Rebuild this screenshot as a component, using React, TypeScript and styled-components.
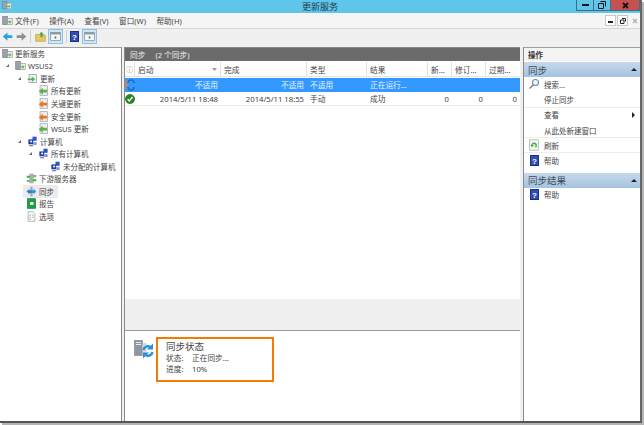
import React from 'react';
import styled, { createGlobalStyle } from 'styled-components';

const GlobalStyle = createGlobalStyle`
  html, body {
    margin: 0;
    padding: 0;
    background: #fff;
  }
  body {
    font-family: "Noto Sans", "Noto Sans CJK SC", sans-serif;
    font-size: 7.5px;
    color: #333;
  }
`;

const Page = styled.div`
  width: 644px;
  height: 425px;
  overflow: hidden;
  background: #fff;
`;

const Win = styled.div`
  width: 642px;
  height: 423px;
  display: flex;
  flex-direction: column;
  background: #f0f0f0;
  border-bottom: 2px solid #555;
  border-right: 2px solid #666;
  box-shadow: 2px 2px 0 #b4b4b4;
  box-sizing: border-box;
`;

const TitleBar = styled.div`
  height: 13px;
  flex: none;
  background: #5fc6ea;
  display: flex;
  align-items: flex-start;
  position: relative;
  padding-left: 2px;
`;

const Title = styled.div`
  position: absolute;
  left: 0;
  right: 0;
  top: 0;
  text-align: center;
  font-size: 9px;
  line-height: 13px;
  color: #1f3a48;
  pointer-events: none;
`;

const Controls = styled.div`
  margin-left: auto;
  display: flex;
  height: 11px;
  border-left: 1px solid #3f6f82;
`;

const CtlBtn = styled.div<{ $close?: boolean; $w: number }>`
  width: ${(p) => p.$w}px;
  height: 11px;
  display: flex;
  align-items: center;
  justify-content: center;
  background: ${(p) => (p.$close ? '#c75050' : '#5fc6ea')};
  border-right: 1px solid #3f6f82;
  border-bottom: 1px solid #3f6f82;
  box-sizing: border-box;
`;

const MenuBar = styled.div`
  height: 16px;
  flex: none;
  display: flex;
  align-items: center;
  background: #f5f5f5;
  border-bottom: 1px solid #d6d6d6;
  box-sizing: border-box;
  padding-left: 2px;
  position: relative;
`;

const MenuItem = styled.span`
  margin-right: 10.5px;
  font-size: 7.6px;
  color: #444;
  white-space: nowrap;
`;

const MenuIcon = styled.div`
  width: 11px;
  margin-right: 2px;
  display: flex;
`;

const ChildCtls = styled.div`
  margin-left: auto;
  display: flex;
  gap: 1px;
`;

const ChildBtn = styled.div<{ $off?: boolean }>`
  width: 11px;
  height: 11px;
  background: ${(p) => (p.$off ? 'transparent' : '#fff')};
  border: 1px solid ${(p) => (p.$off ? 'transparent' : '#c8c8c8')};
  box-sizing: border-box;
  display: flex;
  align-items: center;
  justify-content: center;
`;

const ToolBar = styled.div`
  height: 18px;
  flex: none;
  display: flex;
  align-items: flex-start;
  background: #f0f0f0;
`;

const ToolBtn = styled.div<{ $on?: boolean; $w?: number }>`
  width: ${(p) => p.$w ?? 14}px;
  height: 15px;
  display: flex;
  align-items: center;
  justify-content: center;
  box-sizing: border-box;
  background: ${(p) => (p.$on ? '#cfe6f5' : 'transparent')};
  border: 1px solid ${(p) => (p.$on ? '#8fc3e6' : 'transparent')};
`;

const ToolSep = styled.div<{ $left: number; $right: number }>`
  width: 1px;
  height: 13px;
  margin: 1px ${(p) => p.$right}px 0 ${(p) => p.$left}px;
  background: #d0d0d0;
`;

const Body = styled.div`
  flex: 1;
  min-height: 0;
  display: flex;
  background: #f0f0f0;
`;

const TreePane = styled.div`
  width: 122px;
  flex: none;
  background: #fff;
  box-shadow: inset 0 1px 0 #a0a0a0;
  border-right: 1px solid #8a8a8a;
  box-sizing: border-box;
`;

const TreeRow = styled.div<{ $depth: number }>`
  height: 12.55px;
  display: flex;
  align-items: center;
  padding-left: ${(p) => p.$depth}px;
  white-space: nowrap;
  color: #444;
`;

const Arrow = styled.span`
  width: 0;
  height: 0;
  border-style: solid;
  border-width: 0 0 3px 3px;
  border-color: transparent transparent #666 transparent;
  margin-right: 6px;
  flex: none;
`;

const TreeEntry = styled.span<{ $hot?: boolean }>`
  display: flex;
  align-items: center;
  height: 13px;
  background: ${(p) => (p.$hot ? '#ebebeb' : 'transparent')};
  margin-left: ${(p) => (p.$hot ? '-3px' : '0')};
  padding: ${(p) => (p.$hot ? '0 4px 0 3px' : '0')};
`;

const TreeIcon = styled.span`
  width: 11px;
  height: 11px;
  flex: none;
  display: flex;
  margin-right: 2px;
`;

const Center = styled.div`
  width: 396px;
  flex: none;
  margin-left: 2px;
  display: flex;
  flex-direction: column;
  border-left: 1px solid #8a8a8a;
  background: #fff;
  box-sizing: border-box;
`;

const PaneHead = styled.div`
  height: 14px;
  flex: none;
  background: #6b6b6b;
  color: #eee;
  display: flex;
  align-items: center;
  padding-left: 5px;
  gap: 10px;
  font-size: 7.7px;
  border-top: 1px solid #888;
  box-sizing: border-box;
`;

const Columns = 'grid-template-columns: 10px 86px 86px 60px 61px 24px 34px 34px;';

const HeadRow = styled.div`
  ${Columns}
  display: grid;
  height: 15px;
  flex: none;
  margin-top: 1px;
  border-bottom: 1px solid #e4e4e4;
  box-sizing: border-box;
  align-items: stretch;
`;

const HeadCell = styled.div`
  display: flex;
  align-items: center;
  justify-content: space-between;
  padding: 0 3px;
  border-right: 1px solid #e2e2e2;
  color: #444;
  font-size: 7.7px;
  white-space: nowrap;
  overflow: hidden;
  &:first-child {
    padding: 0;
    justify-content: center;
    color: #888;
    font-size: 7px;
  }
  &:last-child {
    border-right: none;
  }
`;

const Row = styled.div<{ $sel?: boolean }>`
  ${Columns}
  display: grid;
  height: 14px;
  flex: none;
  align-items: center;
  margin-top: ${(p) => (p.$sel ? 1 : 0)}px;
  background: ${(p) => (p.$sel ? '#3399ff' : '#fff')};
  color: ${(p) => (p.$sel ? '#e8f3ff' : '#444')};
  border-bottom: 1px solid ${(p) => (p.$sel ? '#3399ff' : '#ececec')};
  box-sizing: border-box;
  font-size: 7.7px;
`;

const Cell = styled.div<{ $right?: boolean }>`
  text-align: ${(p) => (p.$right ? 'right' : 'left')};
  padding: 0 3px;
  white-space: nowrap;
  overflow: hidden;
  &:first-child {
    padding: 0;
    overflow: visible;
    display: flex;
  }
`;

const Spacer = styled.div`
  flex: 1;
`;

const Band = styled.div`
  height: 32px;
  flex: none;
  background: #f0f0f0;
  border-bottom: 1px solid #9a9a9a;
  box-sizing: border-box;
`;

const Details = styled.div`
  height: 90px;
  flex: none;
  display: flex;
  align-items: flex-start;
  padding: 6px 0 0 9px;
  box-sizing: border-box;
  background: #fff;
`;

const DetailsIcon = styled.div`
  width: 20px;
  height: 20px;
  flex: none;
  margin: 3px 2px 0 0;
`;

const Highlight = styled.div`
  width: 118px;
  height: 45px;
  box-sizing: border-box;
  border: 2px solid #f57c00;
  padding: 1px 0 0 8px;
  color: #444;
`;

const DetailsTitle = styled.div`
  font-size: 9.5px;
  line-height: 13px;
`;

const DetailsLine = styled.div`
  display: flex;
  font-size: 7.7px;
  line-height: 11px;
`;

const DetailsKey = styled.span`
  width: 26px;
`;

const Actions = styled.div`
  flex: 1;
  background: #fff;
  margin-left: 3px;
  border-left: 1px solid #8a8a8a;
  box-sizing: border-box;
`;

const ActionsHead = styled.div`
  height: 14px;
  display: flex;
  align-items: center;
  padding-left: 4px;
  font-size: 7.5px;
  font-weight: 700;
  color: #333;
  background: #f4f4f4;
  border-top: 1px solid #a0a0a0;
  box-sizing: border-box;
  margin-bottom: 1px;
`;

const Section = styled.div`
  height: 15px;
  display: flex;
  align-items: center;
  justify-content: space-between;
  padding: 0 3px 0 4px;
  font-size: 9.5px;
  color: #3c4a5a;
  background: linear-gradient(#c6d9ec, #a5c2de);
`;

const Up = styled.span`
  width: 0;
  height: 0;
  border-style: solid;
  border-width: 0 3px 3px 3px;
  border-color: transparent transparent #222 transparent;
`;

const ActionRow = styled.div<{ $line?: boolean }>`
  height: 15.3px;
  display: flex;
  align-items: center;
  color: #444;
  font-size: 7.5px;
  border-bottom: 1px solid ${(p) => (p.$line ? '#ededed' : 'transparent')};
  box-sizing: border-box;
  padding-right: 5px;
`;

const ActionIcon = styled.span`
  width: 20px;
  flex: none;
  display: flex;
  justify-content: center;
`;

const RightTri = styled.span`
  margin-left: auto;
  width: 0;
  height: 0;
  border-style: solid;
  border-width: 3px 0 3px 3px;
  border-color: transparent transparent transparent #222;
`;

const Gap = styled.div`
  height: 4px;
`;

const Svg = ({ s = 11, children }: { s?: number; children: React.ReactNode }) => (
  <svg width={s} height={s} viewBox="0 0 16 16" style={{ display: 'block' }}>
    {children}
  </svg>
);

const ServerIcon = ({ s }: { s?: number }) => (
  <Svg s={s}>
    <rect x="1" y="2" width="7" height="12" fill="#9aa3ad" stroke="#7a828a" />
    <rect x="8" y="5" width="7" height="9" fill="#eef1e8" stroke="#999" />
    <path d="M7 9h4V7l3 3-3 3v-2H7z" fill="#5cb85c" />
  </Svg>
);

const NodeIcon = () => (
  <Svg>
    <rect x="3" y="2" width="11" height="12" fill="#eef2f5" stroke="#8a96a8" />
    <path d="M1 8h6V5l5 4-5 4v-3H1z" fill="#56b64a" />
  </Svg>
);

const PageArrow = ({ c }: { c: string }) => (
  <Svg>
    <rect x="3" y="1" width="11" height="14" fill="#f0eef0" stroke="#9a9ab0" />
    <path d="M1 9l6-5v3h6v4H7v3z" fill={c} />
  </Svg>
);

const ComputersIcon = () => (
  <Svg>
    <rect x="8" y="1" width="6" height="6" fill="#2f55c4" />
    <rect x="2" y="5" width="7" height="7" fill="#1d3da8" />
    <rect x="9" y="9" width="5" height="4" fill="#7b93d8" />
    <rect x="3" y="13" width="6" height="2" fill="#889" />
    <circle cx="6" cy="8" r="1.5" fill="#fff" />
  </Svg>
);

const DownstreamIcon = () => (
  <Svg>
    <rect x="5" y="1" width="6" height="14" fill="#a8b0a8" />
    <path d="M1 4h5v3H1zM10 9h5v3h-5z" fill="#48ad48" />
    <path d="M1 10h5v3H1zM10 3h5v3h-5z" fill="#6fc26f" />
  </Svg>
);

const SyncIcon = () => (
  <Svg>
    <path d="M8 1v14" stroke="#9aa5b2" strokeWidth="3" />
    <path d="M1 8l4-4v2h4v4H5v2z" fill="#2d7fd4" />
    <path d="M15 8l-4 4v-2H8V6h3V4z" fill="#2d9be0" />
  </Svg>
);

const ReportIcon = () => (
  <Svg>
    <rect x="2" y="1" width="12" height="14" fill="#1e9e4a" stroke="#167a38" />
    <rect x="6" y="6" width="5" height="4" fill="#e3f5e8" />
  </Svg>
);

const OptionsIcon = () => (
  <Svg>
    <path d="M3 1h7l3 3v11H3z" fill="#fbfbfb" stroke="#9a9a9a" />
    <path d="M5 6h2M9 6h2M5 9h2M9 9h2M5 12h2" stroke="#777" />
  </Svg>
);

const HelpIcon = ({ s = 9 }: { s?: number }) => (
  <svg width={s} height={s + 2} viewBox="0 0 9 11" style={{ display: 'block' }}>
    <rect x="0.5" y="0.5" width="8" height="10" fill="#2f4fb5" stroke="#1c2f80" />
    <text x="4.5" y="8.5" fontSize="8" fontWeight="700" fontFamily="Liberation Sans" textAnchor="middle" fill="#fff">?</text>
  </svg>
);

const SearchIcon = () => (
  <Svg s={12}>
    <circle cx="10" cy="6" r="4" fill="#f2f8fc" stroke="#6d8ca0" strokeWidth="1.4" />
    <path d="M7 9l-5 5" stroke="#7a8a70" strokeWidth="2" />
  </Svg>
);

const RefreshIcon = () => (
  <Svg s={12}>
    <rect x="2" y="1" width="12" height="14" fill="#f2f2f2" stroke="#b5b5b5" />
    <path d="M5 9a3 3 0 1 1 5 2" fill="none" stroke="#45b045" strokeWidth="2" />
    <path d="M3 8h5l-2.5 3z" fill="#45b045" />
  </Svg>
);

const OkIcon = () => (
  <svg width={10} height={10} viewBox="0 0 10 10" style={{ display: 'block' }}>
    <circle cx="5" cy="5" r="4.6" fill="#1f8a1f" stroke="#126012" strokeWidth="0.6" />
    <path d="M2.6 5.2l1.7 1.8 3.2-4" fill="none" stroke="#fff" strokeWidth="1.4" />
  </svg>
);

const SmallSync = () => (
  <svg width={10} height={12} viewBox="0 0 10 12" style={{ display: 'block' }}>
    <rect x="0" y="1" width="3" height="9" fill="#8a94a0" />
    <path d="M3 4a3 3 0 0 1 6 0M9 8a3 3 0 0 1-6 0" fill="none" stroke="#1a6fb8" strokeWidth="1.6" />
  </svg>
);

const BigSyncIcon = () => (
  <svg width={20} height={20} viewBox="0 0 20 20" style={{ display: 'block' }}>
    <rect x="0.5" y="0.5" width="8" height="15" fill="#8f98a2" stroke="#777f87" strokeWidth="0.6" />
    <rect x="2" y="2" width="5" height="1" fill="#e8eaec" />
    <rect x="2" y="4" width="5" height="1" fill="#e8eaec" />
    <rect x="8.5" y="3" width="4" height="12" fill="#d5d9dd" />
    <path d="M9.5 10a4.500 4.500 0 0 1 7-3" fill="none" stroke="#2a8fdc" strokeWidth="2.4" />
    <path d="M19 3.500v6h-6z" fill="#2a8fdc" />
    <path d="M18.500 12a4.500 4.500 0 0 1-7 3" fill="none" stroke="#2a8fdc" strokeWidth="2.4" />
    <path d="M9 18.500v-6h6z" fill="#2a8fdc" />
  </svg>
);

const BackIcon = () => (
  <Svg s={11}>
    <path d="M1 8l7-6v4h7v4H8v4z" fill="#2f9fe0" />
  </Svg>
);

const ForwardIcon = () => (
  <Svg s={11}>
    <path d="M15 8L8 2v4H1v4h7v4z" fill="#8f8f8f" />
  </Svg>
);

const FolderUp = () => (
  <Svg s={11}>
    <path d="M1 5h5l1 1h8v9H1z" fill="#e8c860" stroke="#b89a3c" />
    <path d="M9 1l4 4h-2v4H8V5H6z" fill="#4aa84a" />
  </Svg>
);

const PanelIcon = ({ right }: { right?: boolean }) => (
  <Svg s={11}>
    <rect x="1" y="2" width="14" height="12" fill="#f6f6f6" stroke="#7a8a96" />
    <rect x="1" y="2" width="14" height="3" fill="#8a9aa8" />
    <path d={right ? 'M7 7l3 2.500-3 2.500z' : 'M9 7L6 9.500 9 12z'} fill="#3aa03a" />
  </Svg>
);

const treeRows: { label: string; depth: number; arrow?: boolean; icon: React.ReactNode; hot?: boolean }[] = [
  { label: '更新服务', depth: 2, icon: <ServerIcon /> },
  { label: 'WSUS2', depth: 6, arrow: true, icon: <ServerIcon /> },
  { label: '更新', depth: 18, arrow: true, icon: <NodeIcon /> },
  { label: '所有更新', depth: 38, icon: <PageArrow c="#56b64a" /> },
  { label: '关键更新', depth: 38, icon: <PageArrow c="#e87820" /> },
  { label: '安全更新', depth: 38, icon: <PageArrow c="#e87820" /> },
  { label: 'WSUS 更新', depth: 38, icon: <PageArrow c="#56b64a" /> },
  { label: '计算机', depth: 18, arrow: true, icon: <ComputersIcon /> },
  { label: '所有计算机', depth: 29, arrow: true, icon: <ComputersIcon /> },
  { label: '未分配的计算机', depth: 50, icon: <ComputersIcon /> },
  { label: '下游服务器', depth: 26, icon: <DownstreamIcon /> },
  { label: '同步', depth: 26, icon: <SyncIcon />, hot: true },
  { label: '报告', depth: 26, icon: <ReportIcon /> },
  { label: '选项', depth: 26, icon: <OptionsIcon /> },
];

const headers = ['启动', '完成', '类型', '结果', '新...', '修订...', '过期...'];

const App = () => (
  <Page>
    <GlobalStyle />
    <Win>
      <TitleBar>
        <ServerIcon s={10} />
        <Title>更新服务</Title>
        <Controls>
          <CtlBtn $w={17}>
            <svg width="7" height="2"><rect width="7" height="2" fill="#111" /></svg>
          </CtlBtn>
          <CtlBtn $w={17}>
            <svg width="8" height="8" viewBox="0 0 8 8">
              <path d="M2.500 0.500h5v5M0.500 2.500h5v5h-5z" fill="none" stroke="#111" />
            </svg>
          </CtlBtn>
          <CtlBtn $w={29} $close>
            <svg width="7" height="7" viewBox="0 0 7 7">
              <path d="M1 1l5 5M6 1L1 6" stroke="#111" strokeWidth="1.8" />
            </svg>
          </CtlBtn>
        </Controls>
      </TitleBar>
      <MenuBar>
        <MenuIcon><ServerIcon s={11} /></MenuIcon>
        <MenuItem>文件(F)</MenuItem>
        <MenuItem>操作(A)</MenuItem>
        <MenuItem>查看(V)</MenuItem>
        <MenuItem>窗口(W)</MenuItem>
        <MenuItem>帮助(H)</MenuItem>
        <ChildCtls>
          <ChildBtn>
            <svg width="5" height="5"><rect y="3" width="5" height="2" fill="#222" /></svg>
          </ChildBtn>
          <ChildBtn>
            <svg width="6" height="6" viewBox="0 0 6 6">
              <path d="M2 .5h3.500v3M.5 2h3.500v3.500H.5z" fill="none" stroke="#222" />
            </svg>
          </ChildBtn>
          <ChildBtn $off>
            <svg width="6" height="6" viewBox="0 0 6 6">
              <path d="M1 1l4 4M5 1L1 5" stroke="#a9b6c2" strokeWidth="1.5" />
            </svg>
          </ChildBtn>
        </ChildCtls>
      </MenuBar>
      <ToolBar>
        <ToolBtn><BackIcon /></ToolBtn>
        <ToolBtn><ForwardIcon /></ToolBtn>
        <ToolSep $left={2} $right={2} />
        <ToolBtn $w={15}><FolderUp /></ToolBtn>
        <ToolBtn $w={15} $on><PanelIcon /></ToolBtn>
        <ToolSep $left={3} $right={0} />
        <ToolBtn $w={15}><HelpIcon /></ToolBtn>
        <ToolBtn $w={15} $on><PanelIcon right /></ToolBtn>
      </ToolBar>
      <Body>
        <TreePane>
          {treeRows.map((r) => (
            <TreeRow key={r.label} $depth={r.depth}>
              {r.arrow && <Arrow />}
              <TreeEntry $hot={r.hot}>
                <TreeIcon>{r.icon}</TreeIcon>
                {r.label}
              </TreeEntry>
            </TreeRow>
          ))}
        </TreePane>
        <Center>
          <PaneHead>
            <span>同步</span>
            <span>(2 个同步)</span>
          </PaneHead>
          <HeadRow>
            <HeadCell>ⓘ</HeadCell>
            {headers.map((h, i) => (
              <HeadCell key={h}>
                <span>{h}</span>
                {i === 0 && (
                  <svg width="5" height="3"><path d="M0 0h5L2.500 3z" fill="#999" /></svg>
                )}
              </HeadCell>
            ))}
          </HeadRow>
          <Row $sel>
            <Cell><SmallSync /></Cell>
            <Cell $right>不适用</Cell>
            <Cell $right>不适用</Cell>
            <Cell>不适用</Cell>
            <Cell>正在运行...</Cell>
          </Row>
          <Row>
            <Cell><OkIcon /></Cell>
            <Cell $right>2014/5/11 18:48</Cell>
            <Cell $right>2014/5/11 18:55</Cell>
            <Cell>手动</Cell>
            <Cell>成功</Cell>
            <Cell $right>0</Cell>
            <Cell $right>0</Cell>
            <Cell $right>0</Cell>
          </Row>
          <Spacer />
          <Band />
          <Details>
            <DetailsIcon><BigSyncIcon /></DetailsIcon>
            <Highlight>
              <DetailsTitle>同步状态</DetailsTitle>
              <DetailsLine><DetailsKey>状态:</DetailsKey>正在同步...</DetailsLine>
              <DetailsLine><DetailsKey>进度:</DetailsKey>10%</DetailsLine>
            </Highlight>
          </Details>
        </Center>
        <Actions>
          <ActionsHead>操作</ActionsHead>
          <Section>同步<Up /></Section>
          <ActionRow><ActionIcon><SearchIcon /></ActionIcon>搜索...</ActionRow>
          <ActionRow $line><ActionIcon />停止同步</ActionRow>
          <ActionRow><ActionIcon />查看<RightTri /></ActionRow>
          <ActionRow $line><ActionIcon />从此处新建窗口</ActionRow>
          <ActionRow $line><ActionIcon><RefreshIcon /></ActionIcon>刷新</ActionRow>
          <ActionRow><ActionIcon><HelpIcon /></ActionIcon>帮助</ActionRow>
          <Gap />
          <Section>同步结果<Up /></Section>
          <ActionRow><ActionIcon><HelpIcon /></ActionIcon>帮助</ActionRow>
        </Actions>
      </Body>
    </Win>
  </Page>
);

export default App;
